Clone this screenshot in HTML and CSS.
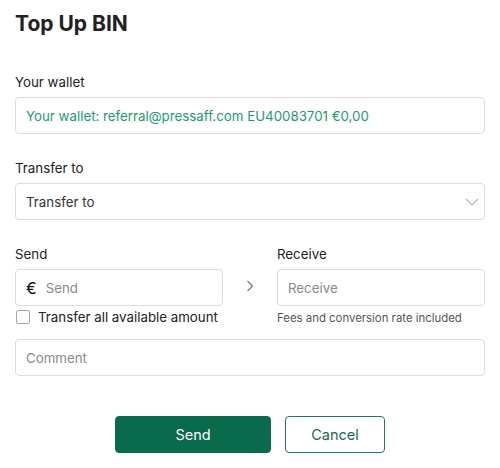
FILE: index.html
```html
<!DOCTYPE html>
<html lang="en">
  <head>
    <meta charset="UTF-8" />
    <title>Top Up BIN</title>
    <link rel="stylesheet" href="styles.css">
  </head>
  <body>
    <h1 class="title">Top Up BIN</h1>

    <div class="field">
      <label class="label">Your wallet</label>
      <div class="box wallet">Your wallet: referral@pressaff.com EU40083701 €0,00</div>
    </div>

    <div class="field">
      <label class="label">Transfer to</label>
      <div class="box select">
        <span>Transfer to</span>
        <svg class="chev-down" width="14" height="8" viewBox="0 0 14 8"><path d="M1 1l6 6 6-6" fill="none" stroke="#b5b5b5" stroke-width="1.2"/></svg>
      </div>
    </div>

    <div class="amounts">
      <div class="col">
        <label class="label">Send</label>
        <div class="box money"><span class="euro">€</span><span class="ph">Send</span></div>
        <div class="check-row"><span class="check"></span>Transfer all available amount</div>
      </div>
      <div class="arrow">
        <svg width="8" height="12" viewBox="0 0 8 12"><path d="M1.5 1l5 5-5 5" fill="none" stroke="#777" stroke-width="1.2"/></svg>
      </div>
      <div class="col">
        <label class="label">Receive</label>
        <div class="box"><span class="ph">Receive</span></div>
        <div class="hint">Fees and conversion rate included</div>
      </div>
    </div>

    <div class="box comment"><span class="ph">Comment</span></div>

    <div class="actions">
      <button class="btn btn-primary">Send</button>
      <button class="btn btn-outline">Cancel</button>
    </div>
  </body>
</html>
```

FILE: styles.css
```css
body {
  margin: 0;
  padding: 10px 15px 0;
  background-color: white;
  color: #222;
  font-family: Inter, "Noto Sans", sans-serif;
  font-size: 13.3px;
}
.title {
  margin: 0 0 34px;
  font-size: 21px;
  line-height: 28px;
  font-weight: 700;
  color: #1f2124;
}
.field {
  margin-bottom: 24px;
}
.label {
  display: block;
  line-height: 20px;
  margin-bottom: 5px;
}
.box {
  box-sizing: border-box;
  height: 37px;
  border: 1px solid #dcdcdc;
  border-radius: 4px;
  padding: 0 10px;
  display: flex;
  align-items: center;
  color: #333;
}
.wallet {
  color: #1d9c69;
}
.select {
  justify-content: space-between;
  padding-right: 5px;
}
.amounts {
  display: flex;
  align-items: flex-start;
}
.col {
  width: 208px;
  flex: 1;
}
.arrow {
  width: 54px;
  padding-top: 36px;
  display: flex;
  justify-content: center;
}
.money {
  gap: 9px;
}
.euro {
  font-size: 16px;
  color: #111;
}
.ph {
  color: #8a8a8a;
}
.check-row {
  display: flex;
  align-items: center;
  gap: 8px;
  height: 22px;
  line-height: 22px;
  white-space: nowrap;
}
.check {
  width: 12px;
  height: 12px;
  border: 1px solid #a5a5a5;
  border-radius: 2px;
  margin-left: 1px;
}
.hint {
  font-size: 11.4px;
  line-height: 24px;
  color: #555;
}
.comment {
  margin-top: 9px;
}
.actions {
  display: flex;
  justify-content: center;
  gap: 14px;
  margin-top: 40px;
}
.btn {
  box-sizing: border-box;
  height: 37px;
  border-radius: 4px;
  font-family: Inter, "Noto Sans", sans-serif;
  font-size: 14.5px;
  cursor: pointer;
}
.btn-primary {
  width: 156px;
  background-color: #0a6a4c;
  border: 1px solid #0a6a4c;
  color: white;
}
.btn-outline {
  width: 100px;
  background-color: white;
  border: 1px solid #1f7a5c;
  color: #1a6a50;
}
```
